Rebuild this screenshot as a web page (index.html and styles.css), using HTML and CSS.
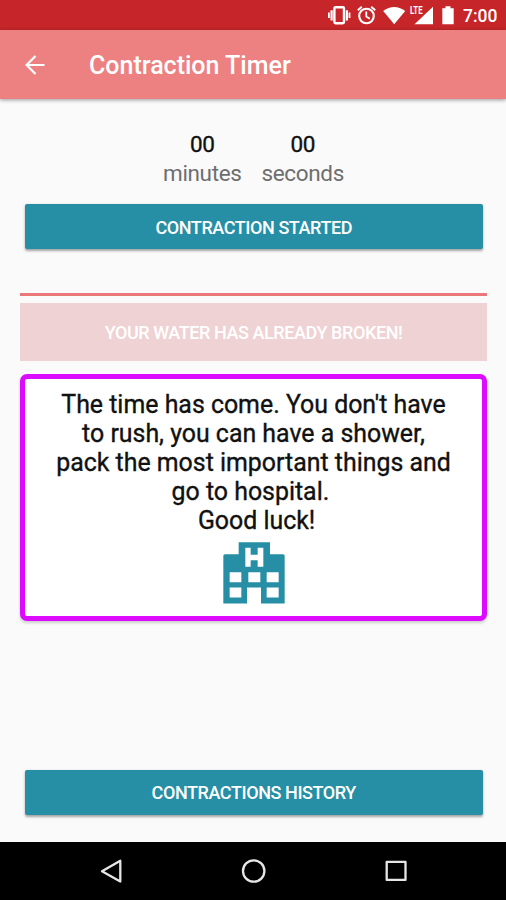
FILE: index.html
```html
<!DOCTYPE html>
<html lang="en">
<head>
<meta charset="utf-8">
<title>Contraction Timer</title>
<link rel="stylesheet" href="styles.css">
</head>
<body>
<div class="screen">
  <div class="status-bar">
    <svg class="status-icons" width="130" height="30" viewBox="326 0 130 30" fill="#fff">
      <g fill="none" stroke="#fff">
        <rect x="334.4" y="7.2" width="9.6" height="16" rx="1.2" stroke-width="2.4"/>
        <path d="M331.6 10.2v10.2M346.9 10.2v10.2" stroke-width="2.2"/>
        <path d="M328.9 12.5v5.5M349.5 12.5v5.5" stroke-width="1.8"/>
        <circle cx="366.5" cy="16" r="7.3" stroke-width="2.1"/>
        <path d="M366.3 11.5v5l3.5 2.2" stroke-width="1.8"/>
        <path d="M357.8 10.2l4-3.4M375.2 10.2l-4-3.4" stroke-width="2"/>
      </g>
      <path d="M383.2 11Q394.2 3 405.2 11L394.2 24.3z"/>
      <path d="M433 6.8v17.5h-18.5z"/>
      <path class="lte-gap" d="M409 5h14v10h-14z"/>
      <text class="lte" x="410" y="14.3" textLength="12.5" lengthAdjust="spacingAndGlyphs">LTE</text>
      <path d="M445.5 6.2h5v2h3.2v16h-11.4v-16h3.2z"/>
    </svg>
    <span class="clock">7:00</span>
  </div>
  <header class="app-bar">
    <svg class="back" width="20" height="20" viewBox="0 0 20 20" fill="none" stroke="#fff" stroke-width="2.2"><path d="M19.5 10H1.8M10.5 1L1.6 10l8.9 9"/></svg>
    <h1 class="title">Contraction Timer</h1>
  </header>
  <main class="content">
    <div class="timer">
      <div class="unit"><span class="value">00</span><span class="label">minutes</span></div>
      <div class="unit"><span class="value">00</span><span class="label">seconds</span></div>
    </div>
    <button class="button start"><span>CONTRACTION STARTED</span></button>
    <div class="divider"></div>
    <button class="water" disabled><span>YOUR WATER HAS ALREADY BROKEN!</span></button>
    <section class="card">
      <p class="message">The time has come. You don't have<br>to rush, you can have a shower,<br>pack the most important things and<br>go to hospital.&nbsp;<br>&nbsp;Good luck!</p>
      <svg class="hospital" width="62" height="62" viewBox="37 36 186 185">
        <path fill="#268fa5" fill-rule="evenodd" d="M84 36h94v36h39q5 0 5 5v143h-71v-48h-42v48H38V77q0-5 5-5h41zM104 53v57h16V90h21v20h17V53h-17v21h-21V53zM57 126v30h35v-30zM113 126v30h36v-30zM168 126v30h36v-30zM57 172v30h35v-30zM168 172v30h36v-30z"/>
      </svg>
    </section>
    <button class="button history"><span>CONTRACTIONS HISTORY</span></button>
  </main>
  <nav class="nav-bar">
    <svg width="506" height="58" viewBox="0 842 506 58" fill="none" stroke="#e6e6e6" stroke-width="2.3" stroke-linejoin="round">
      <path d="M120.3 860.8v20.8L102 871.2z"/>
      <circle cx="253.7" cy="871" r="10.7"/>
      <rect x="386.7" y="861.9" width="18.8" height="18"/>
    </svg>
  </nav>
</div>
</body>
</html>
```
FILE: styles.css
```css
* { box-sizing: border-box; }
body { margin: 0; font-family: Roboto, sans-serif; }
.screen { width: 506px; height: 900px; display: flex; flex-direction: column; background: #fafafa; overflow: hidden; }
.status-bar { height: 30px; flex: none; display: flex; align-items: center; justify-content: flex-end; padding-right: 9px; background: #c62629; color: #fff; }
.status-icons { margin-right: 7px; }
.lte-gap { fill: #c62629; }
.lte { font: 700 10px Roboto, sans-serif; }
.clock { width: 34px; font-size: 17.5px; font-weight: 500; line-height: 30px; padding-top: 2px; white-space: nowrap; }
.app-bar { height: 69px; flex: none; display: flex; align-items: center; padding-left: 25px; background: #ed8080; box-shadow: 0 1px 4px rgba(0, 0, 0, .4); color: #fff; z-index: 1; }
.title { margin: 2px 0 0 44px; font-size: 25px; font-weight: 500; line-height: 30px; }
.content { flex: 1; display: flex; flex-direction: column; padding: 31px 19px 27px 20px; }
.timer { display: flex; justify-content: center; gap: 20px; height: 74px; }
.unit { display: flex; flex-direction: column; align-items: center; }
.value, .label { font-size: 22.5px; line-height: 29px; }
.value { color: #111; letter-spacing: -.4px; -webkit-text-stroke: .35px #111; }
.label { color: #6e6e6e; letter-spacing: -.35px; }
.button, .water { display: flex; align-items: center; justify-content: center; flex: none; border: 0; padding: 0; font-family: inherit; font-size: 18px; font-weight: 500; letter-spacing: -.42px; color: #fff; }
.button { height: 45px; margin: 0 4.5px 0 5px; border-radius: 2px; background: #268fa5; box-shadow: 0 1.5px 2.5px rgba(0, 0, 0, .35); }
.start { padding-top: 2px; }
.divider { flex: none; height: 3px; margin: 44px 0 7px; background: #ea777a; }
.water { height: 58px; padding-top: 1px; background: #efd2d3; }
.card { flex: none; height: 247px; margin-top: 13px; padding-top: 11px; border: 5px solid #dc0aff; border-radius: 7px; background: #fff; box-shadow: 0 2px 3px rgba(0, 0, 0, .18); display: flex; flex-direction: column; align-items: center; }
.message { margin: 0; text-align: center; font-size: 24.9px; font-weight: 400; line-height: 29px; color: #111; white-space: nowrap; -webkit-text-stroke: .35px #111; }
.hospital { margin-top: 6.5px; }
.history { margin-top: auto; }
.nav-bar { height: 58px; flex: none; background: #000; }
```
